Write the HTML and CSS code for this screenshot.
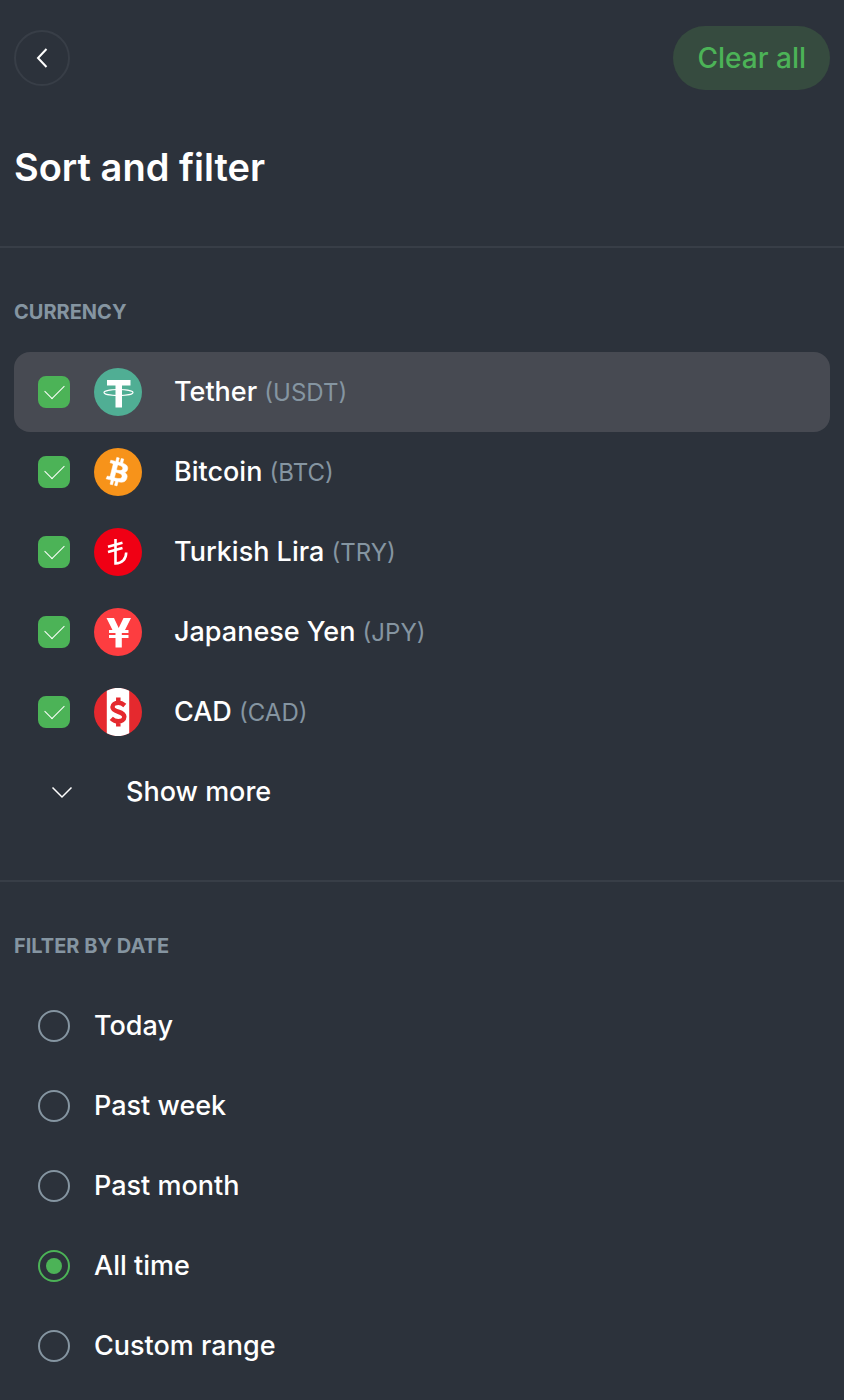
FILE: index.html
```html
<!DOCTYPE html>
<html lang="en">
<head>
    <meta charset="UTF-8">
    <meta name="viewport" content="width=device-width, initial-scale=1.0">
    <title>Sort and filter</title>
    <link rel="stylesheet" href="styles.css">
</head>
<body>

    <!-- Header -->
    <header class="header">
        <div class="toolbar">
            <button type="button" class="back-btn" aria-label="Back">
                <svg width="24" height="24" viewBox="0 0 24 24"><path d="M16.500 3L8 12L16.500 21"/></svg>
            </button>
            <button type="button" class="clear-btn">Clear all</button>
        </div>
        <h1>Sort and filter</h1>
    </header>

    <form>
        <!-- Currency -->
        <section class="section">
            <h2>CURRENCY</h2>
            <label class="option active">
                <input type="checkbox" name="currency" value="USDT" checked>
                <svg class="coin" viewBox="0 0 48 48">
                    <circle cx="24" cy="24" r="24" fill="#50ae94"/>
                    <path d="M13 12H36.500V17.500H28V39.500H21.500V17.500H13Z" fill="#fff"/>
                    <ellipse cx="24.500" cy="24.500" rx="14.500" ry="3" fill="none" stroke="#fff" stroke-width="1.200"/>
                </svg>
                <span class="name">Tether <small>(USDT)</small></span>
            </label>
            <label class="option">
                <input type="checkbox" name="currency" value="BTC" checked>
                <svg class="coin" viewBox="0 0 48 48">
                    <circle cx="24" cy="24" r="24" fill="#f7931a"/>
                    <path transform="translate(.5 .8) scale(1.430)" fill="#fff" stroke="#fff" stroke-width=".4" d="M23.189 14.02c.314-2.096-1.283-3.223-3.465-3.975l.708-2.84-1.728-.43-.69 2.765c-.454-.114-.92-.22-1.385-.326l.695-2.783L15.596 6l-.708 2.839c-.376-.086-.746-.17-1.104-.26l.002-.009-2.384-.595-.46 1.846s1.283.294 1.256.312c.7.175.826.638.805 1.006l-.806 3.235c.048.012.11.03.18.057l-.183-.045-1.13 4.532c-.086.212-.303.531-.793.41.018.025-1.256-.313-1.256-.313l-.858 1.978 2.25.561c.418.105.828.215 1.231.318l-.715 2.872 1.727.43.708-2.84c.472.127.93.245 1.378.357l-.706 2.828 1.728.43.715-2.866c2.948.558 5.164.333 6.097-2.333.752-2.146-.037-3.385-1.588-4.192 1.13-.26 1.98-1.003 2.207-2.538zm-3.95 5.538c-.533 2.147-4.148.986-5.32.695l.95-3.805c1.172.293 4.929.872 4.37 3.11zm.535-5.569c-.487 1.953-3.495.96-4.47.717l.86-3.45c.975.243 4.118.696 3.61 2.733z"/>
                </svg>
                <span class="name">Bitcoin <small>(BTC)</small></span>
            </label>
            <label class="option">
                <input type="checkbox" name="currency" value="TRY" checked>
                <svg class="coin" viewBox="0 0 48 48">
                    <circle cx="24" cy="24" r="24" fill="#f00014"/>
                    <path d="M21.500 11V35.500C28 35.500 32.200 31 32.200 24.500M14 18.800L28.500 14.700M14 24L28.500 19.900" fill="none" stroke="#fff" stroke-width="2.600"/>
                </svg>
                <span class="name">Turkish Lira <small>(TRY)</small></span>
            </label>
            <label class="option">
                <input type="checkbox" name="currency" value="JPY" checked>
                <svg class="coin" viewBox="0 0 48 48">
                    <circle cx="24" cy="24" r="24" fill="#fd3d40"/>
                    <path d="M12.500 10H20L24.700 20L29.500 10H37L31 22H34.500V25H27.800V27H34.500V30H27.800V39.500H21.500V30H15V27H21.500V25H15V22H18.500Z" fill="#fff"/>
                </svg>
                <span class="name">Japanese Yen <small>(JPY)</small></span>
            </label>
            <label class="option">
                <input type="checkbox" name="currency" value="CAD" checked>
                <svg class="coin" viewBox="0 0 48 48">
                    <circle cx="24" cy="24" r="24" fill="#e5292e"/>
                    <path d="M12.800 2.800A24 24 0 0 1 35.200 2.800V45.200A24 24 0 0 1 12.800 45.200Z" fill="#fff"/>
                    <path d="M24.300 9.500V15M24.300 33V38.500M30.800 17.500C28.500 15.500 26.500 14.800 24.300 14.800C21 14.800 18.500 16.500 18.500 19C18.500 25 30.300 22.500 30.300 28.800C30.300 31.500 27.500 33.300 24.300 33.300C21.500 33.300 19.300 32.300 17.300 30.300" fill="none" stroke="#e5292e" stroke-width="4.500"/>
                </svg>
                <span class="name">CAD <small>(CAD)</small></span>
            </label>
            <button type="button" class="more-btn">
                <svg width="24" height="24" viewBox="0 0 24 24"><path d="M2.500 7.500L12 17L21.500 7.500"/></svg>
                Show more
            </button>
        </section>

        <!-- Date -->
        <section class="section">
            <h2>FILTER BY DATE</h2>
            <label class="option">
                <input type="radio" name="date" value="today">
                Today
            </label>
            <label class="option">
                <input type="radio" name="date" value="week">
                Past week
            </label>
            <label class="option">
                <input type="radio" name="date" value="month">
                Past month
            </label>
            <label class="option">
                <input type="radio" name="date" value="all" checked>
                All time
            </label>
            <label class="option">
                <input type="radio" name="date" value="custom">
                Custom range
            </label>
        </section>
    </form>

</body>
</html>
```
FILE: styles.css
```css
* {
    margin: 0;
    padding: 0;
    box-sizing: border-box;
}

body {
    background: #2c323b;
    color: #ffffff;
    font-family: Inter, "Liberation Sans", sans-serif;
    font-size: 27px;
    font-weight: 500;
    line-height: 40px;
    min-height: 100vh;
}

button {
    border: none;
    background: none;
    color: inherit;
    font: inherit;
    cursor: pointer;
}

svg {
    flex: none;
}

button svg {
    fill: none;
    stroke: #ffffff;
    stroke-width: 2;
}

/* Header */
.header {
    padding: 26px 14px 52px;
}

.toolbar {
    display: flex;
    justify-content: space-between;
    align-items: center;
    margin-bottom: 50px;
}

.back-btn {
    display: flex;
    align-items: center;
    justify-content: center;
    width: 56px;
    height: 56px;
    border: 2px solid #383e47;
    border-radius: 50%;
}

.clear-btn {
    padding: 12px 24px;
    border-radius: 32px;
    background: #364b3f;
    color: #4cb357;
    font-size: 28px;
}

h1 {
    font-size: 38px;
    font-weight: 600;
    line-height: 54px;
}

/* Sections */
.section {
    border-top: 2px solid #383e47;
    padding: 52px 14px 48px;
}

h2 {
    margin-bottom: 28px;
    color: #8595a1;
    font-size: 20px;
    font-weight: 700;
    line-height: 24px;
}

.option {
    display: flex;
    align-items: center;
    gap: 24px;
    height: 80px;
    padding: 0 24px;
    border-radius: 16px;
    cursor: pointer;
}

.option.active {
    background: #474a52;
}

.coin {
    width: 48px;
    height: 48px;
}

.name {
    padding-left: 8px;
}

small {
    color: #8595a1;
    font-size: 24px;
    font-weight: 400;
    line-height: 24px;
}

input {
    appearance: none;
    display: grid;
    place-content: center;
    flex: none;
    width: 32px;
    height: 32px;
    cursor: pointer;
}

input[type="checkbox"] {
    border: 2px solid #8595a1;
    border-radius: 8px;
}

input[type="checkbox"]:checked {
    border-color: #4cb357;
    background: #4cb357;
}

input[type="checkbox"]:checked::before {
    content: "";
    width: 10px;
    height: 17px;
    margin-bottom: 7px;
    border: solid #ffffff;
    border-width: 0 1px 1px 0;
    transform: rotate(45deg);
}

input[type="radio"] {
    border: 2px solid #8595a1;
    border-radius: 50%;
}

input[type="radio"]:checked {
    border-color: #4cb357;
}

input[type="radio"]:checked::before {
    content: "";
    width: 16px;
    height: 16px;
    border-radius: 50%;
    background: #4cb357;
}

.more-btn {
    display: flex;
    align-items: center;
    gap: 52px;
    width: 100%;
    height: 80px;
    padding: 0 36px;
}

.more-btn svg {
    stroke-width: 1.5;
}
```
